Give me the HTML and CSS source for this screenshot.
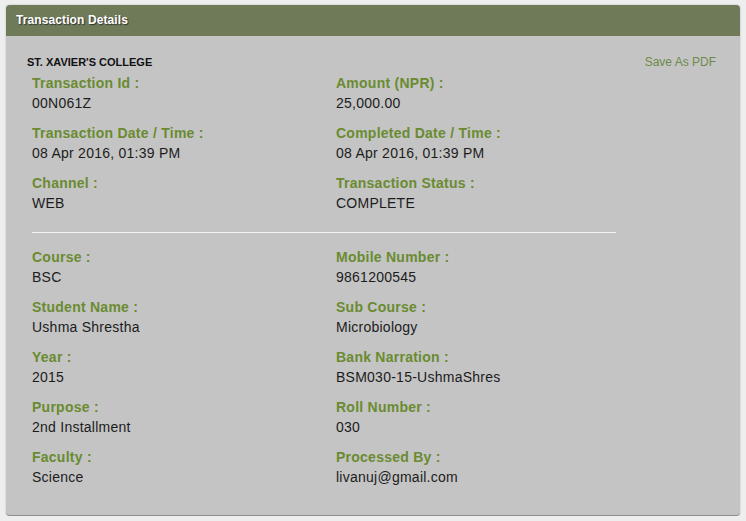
FILE: index.html
```html
<!DOCTYPE html>
<html>
<head>
<meta charset="utf-8">
<link rel="stylesheet" href="styles.css">
</head>
<body>
<div class="panel">
  <div class="panel-head">Transaction Details</div>
  <div class="panel-body">
    <div class="top-row">
      <span class="college">ST. XAVIER'S COLLEGE</span>
      <a class="pdf">Save As PDF</a>
    </div>
    <div class="grid first">
      <div class="field"><div class="label">Transaction Id :</div><div class="value">00N061Z</div></div>
      <div class="field"><div class="label">Amount (NPR) :</div><div class="value">25,000.00</div></div>
      <div class="field"><div class="label">Transaction Date / Time :</div><div class="value">08 Apr 2016, 01:39 PM</div></div>
      <div class="field"><div class="label">Completed Date / Time :</div><div class="value">08 Apr 2016, 01:39 PM</div></div>
      <div class="field"><div class="label">Channel :</div><div class="value">WEB</div></div>
      <div class="field"><div class="label">Transaction Status :</div><div class="value">COMPLETE</div></div>
    </div>
    <hr class="sep">
    <div class="grid">
      <div class="field"><div class="label">Course :</div><div class="value">BSC</div></div>
      <div class="field"><div class="label">Mobile Number :</div><div class="value">9861200545</div></div>
      <div class="field"><div class="label">Student Name :</div><div class="value">Ushma Shrestha</div></div>
      <div class="field"><div class="label">Sub Course :</div><div class="value">Microbiology</div></div>
      <div class="field"><div class="label">Year :</div><div class="value">2015</div></div>
      <div class="field"><div class="label">Bank Narration :</div><div class="value">BSM030-15-UshmaShres</div></div>
      <div class="field"><div class="label">Purpose :</div><div class="value">2nd Installment</div></div>
      <div class="field"><div class="label">Roll Number :</div><div class="value">030</div></div>
      <div class="field"><div class="label">Faculty :</div><div class="value">Science</div></div>
      <div class="field"><div class="label">Processed By :</div><div class="value">livanuj@gmail.com</div></div>
    </div>
  </div>
</div>
</body>
</html>
```
FILE: styles.css
```css
html, body {
  margin: 0;
  padding: 0;
}
body {
  background: #eeeeee;
  font-family: "Liberation Sans", Arial, sans-serif;
  padding: 5px 6px 0 6px;
}
.panel {
  width: 734px;
  height: 511px;
  box-sizing: border-box;
  background: #c4c4c4;
  border-radius: 4px;
  border-bottom: 1px solid #8f8f8f;
  box-shadow: 0 0 2px rgba(0,0,0,0.25);
  overflow: hidden;
}
.panel-head {
  height: 31px;
  background: #6e7a58;
  color: #ffffff;
  font-weight: bold;
  font-size: 12px;
  line-height: 31px;
  padding-left: 10px;
  text-shadow: 1px 1px 1px #333;
  letter-spacing: 0.1px;
}
.panel-body {
  padding: 18px 24px 0 21px;
}
.top-row {
  display: flex;
  justify-content: space-between;
  align-items: center;
  height: 16px;
}
.college {
  font-size: 11px;
  font-weight: bold;
  color: #111;
}
.pdf {
  font-size: 12px;
  color: #6d8a4a;
}
.grid {
  display: grid;
  grid-template-columns: 304px 280px;
  row-gap: 10px;
  margin-left: 5px;
  width: 584px;
}
.grid.first {
  margin-top: 3px;
}
.label {
  font-size: 14px;
  font-weight: bold;
  color: #6a8b30;
  line-height: 20px;
  letter-spacing: 0.25px;
}
.value {
  font-size: 14px;
  color: #1c1c1c;
  line-height: 20px;
  letter-spacing: 0.25px;
}
.sep {
  width: 584px;
  margin: 19px 0 14px 5px;
  border: 0;
  border-top: 1px solid #f2f2f2;
  height: 0;
}
```
